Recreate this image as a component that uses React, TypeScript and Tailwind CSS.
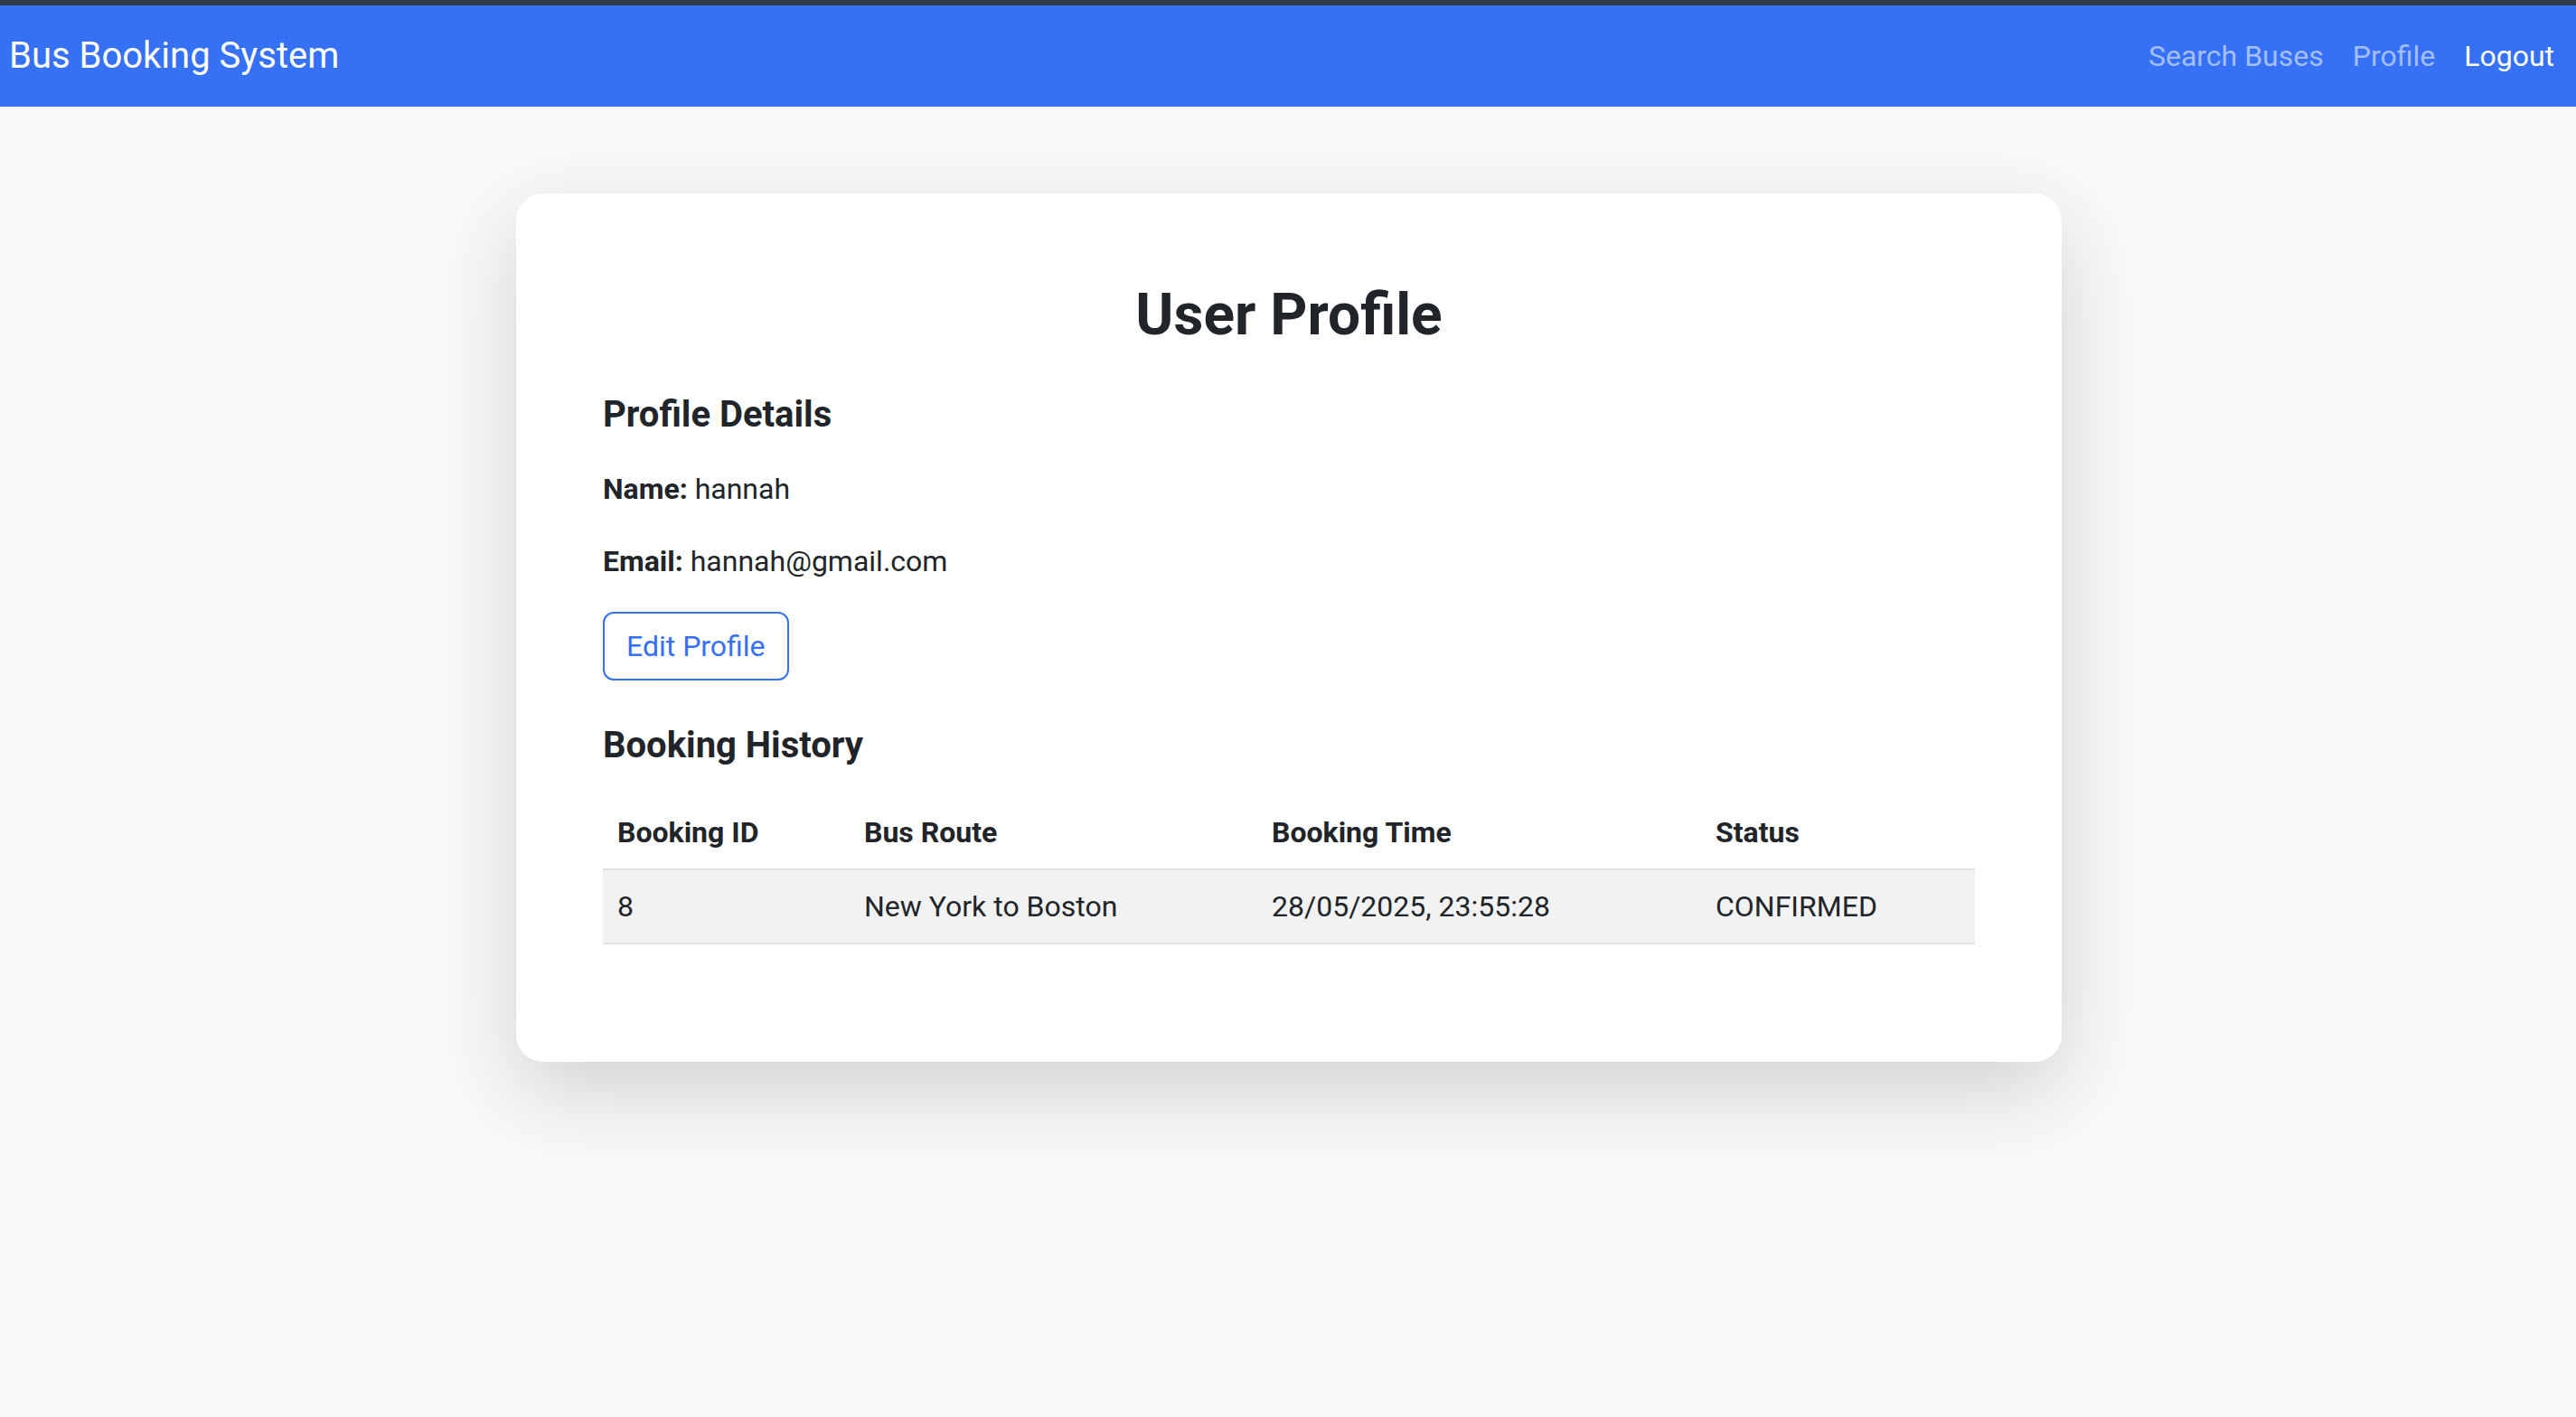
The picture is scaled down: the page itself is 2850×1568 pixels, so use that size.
import React from 'react';

const bookings = [
  { id: 8, route: 'New York to Boston', time: '28/05/2025, 23:55:28', status: 'CONFIRMED' },
];

const Navbar: React.FC = () => (
  <nav className="flex h-[112px] items-center justify-between bg-[#3570f5] pl-[10px] pr-[24px]">
    <span className="text-[40px] leading-[48px] text-white">Bus Booking System</span>
    <div className="flex items-center gap-8 text-[32px] leading-[48px]">
      <a className="text-[#a4befa]">Search Buses</a>
      <a className="text-[#a4befa]">Profile</a>
      <a className="text-white">Logout</a>
    </div>
  </nav>
);

export default function App() {
  return (
    <div className="min-h-screen bg-[#f8f9fa] font-['Roboto',sans-serif] text-[#212529]">
      <div className="h-[6px] bg-[#2f3e46]" />
      <Navbar />

      <main className="flex justify-center pt-[96px] pb-[96px]">
        <div className="ml-[2px] w-[1710px] rounded-[30px] bg-white p-[96px] pb-[98px] shadow-[0_32px_96px_rgba(0,0,0,0.16)]">
          <h1 className="mb-[48px] text-center text-[64px] font-bold leading-[77px]">User Profile</h1>

          {/* Profile details */}
          <h5 className="mb-[34px] text-[40px] font-bold leading-[48px]">Profile Details</h5>
          <p className="mb-[32px] text-[32px] leading-[48px]">
            <strong className="font-bold">Name:</strong> hannah
          </p>
          <p className="mb-[32px] text-[32px] leading-[48px]">
            <strong className="font-bold">Email:</strong> hannah@gmail.com
          </p>
          <button className="h-[76px] rounded-[12px] border-2 border-[#3570f5] px-[24px] text-[32px] leading-[48px] text-[#3570f5]">
            Edit Profile
          </button>

          {/* Booking history */}
          <h5 className="mt-[48px] mb-[32px] text-[40px] font-bold leading-[48px]">Booking History</h5>
          <table className="mb-[32px] w-full border-collapse text-left text-[32px] leading-[48px]">
            <thead>
              <tr className="border-b-2 border-[#dee2e6]">
                <th className="w-[273px] p-4 font-bold">Booking ID</th>
                <th className="w-[451px] p-4 font-bold">Bus Route</th>
                <th className="w-[491px] p-4 font-bold">Booking Time</th>
                <th className="p-4 font-bold">Status</th>
              </tr>
            </thead>
            <tbody>
              {bookings.map((b) => (
                <tr key={b.id} className="border-b-2 border-[#dee2e6] bg-[#f2f2f2]">
                  <td className="p-4">{b.id}</td>
                  <td className="p-4">{b.route}</td>
                  <td className="p-4">{b.time}</td>
                  <td className="p-4">{b.status}</td>
                </tr>
              ))}
            </tbody>
          </table>
        </div>
      </main>
    </div>
  );
}
